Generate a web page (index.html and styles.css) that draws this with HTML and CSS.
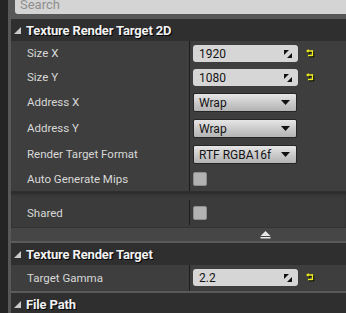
FILE: index.html
```html
<!DOCTYPE html>
<html>
<head>
<meta charset="utf-8">
<link rel="stylesheet" href="styles.css">
</head>
<body>
<div class="app">
  <div class="gutter"></div>
  <div class="strip"></div>
  <div class="panel">
    <div class="search-wrap"><div class="search"><span>Search</span></div></div>

    <div class="cat-header"><span class="tri"></span><span class="cat-title">Texture Render Target 2D</span></div>
    <div class="rows">
      <div class="row row-input">
        <div class="name">Size X</div>
        <div class="value">
          <div class="num"><span>1920</span><svg class="spin" width="8" height="8" viewBox="0 0 8 8"><polygon points="0,0 5,0 0,5" fill="#111"/><polygon points="8,3 8,8 3,8" fill="#111"/></svg></div>
          <svg class="reset" width="10" height="10" viewBox="0 0 10 10"><g transform="translate(1,1)" fill="#000" stroke="#000"><path d="M2 2H6.5V6.5H2" fill="none" stroke-width="1.4"/><polygon points="0,2 2.6,0 2.6,4" stroke="none"/></g><g fill="#f0f020" stroke="#f0f020"><path d="M2 2H6.5V6.5H2" fill="none" stroke-width="1.4"/><polygon points="0,2 2.6,0 2.6,4" stroke="none"/></g></svg>
        </div>
      </div>
      <div class="row row-input">
        <div class="name">Size Y</div>
        <div class="value">
          <div class="num"><span>1080</span><svg class="spin" width="8" height="8" viewBox="0 0 8 8"><polygon points="0,0 5,0 0,5" fill="#111"/><polygon points="8,3 8,8 3,8" fill="#111"/></svg></div>
          <svg class="reset" width="10" height="10" viewBox="0 0 10 10"><g transform="translate(1,1)" fill="#000" stroke="#000"><path d="M2 2H6.5V6.5H2" fill="none" stroke-width="1.4"/><polygon points="0,2 2.6,0 2.6,4" stroke="none"/></g><g fill="#f0f020" stroke="#f0f020"><path d="M2 2H6.5V6.5H2" fill="none" stroke-width="1.4"/><polygon points="0,2 2.6,0 2.6,4" stroke="none"/></g></svg>
        </div>
      </div>
      <div class="row row-combo">
        <div class="name">Address X</div>
        <div class="value"><div class="combo"><span>Wrap</span><span class="caret"></span></div></div>
      </div>
      <div class="row row-combo">
        <div class="name">Address Y</div>
        <div class="value"><div class="combo"><span>Wrap</span><span class="caret"></span></div></div>
      </div>
      <div class="row row-combo">
        <div class="name">Render Target Format</div>
        <div class="value"><div class="combo"><span>RTF RGBA16f</span><span class="caret"></span></div></div>
      </div>
      <div class="row row-check">
        <div class="name">Auto Generate Mips</div>
        <div class="value"><div class="check"></div></div>
      </div>
    </div>

    <div class="advanced">
      <div class="row row-shared">
        <div class="name">Shared</div>
        <div class="value"><div class="check"></div></div>
      </div>
      <div class="adv-bar">
        <svg width="11" height="8" viewBox="0 0 11 8"><polygon points="5.5,0 10.5,5 0.5,5" fill="#e6e6e6"/><rect x="0.5" y="6" width="10" height="1.5" fill="#e6e6e6"/></svg>
      </div>
    </div>

    <div class="sep"></div>
    <div class="cat-header"><span class="tri"></span><span class="cat-title">Texture Render Target</span></div>
    <div class="row row-gamma">
      <div class="name">Target Gamma</div>
      <div class="value">
        <div class="num"><span>2.2</span><svg class="spin" width="8" height="8" viewBox="0 0 8 8"><polygon points="0,0 5,0 0,5" fill="#111"/><polygon points="8,3 8,8 3,8" fill="#111"/></svg></div>
        <svg class="reset" width="10" height="10" viewBox="0 0 10 10"><g transform="translate(1,1)" fill="#000" stroke="#000"><path d="M2 2H6.5V6.5H2" fill="none" stroke-width="1.4"/><polygon points="0,2 2.6,0 2.6,4" stroke="none"/></g><g fill="#f0f020" stroke="#f0f020"><path d="M2 2H6.5V6.5H2" fill="none" stroke-width="1.4"/><polygon points="0,2 2.6,0 2.6,4" stroke="none"/></g></svg>
      </div>
    </div>
    <div class="sep"></div>
    <div class="cat-header"><span class="tri"></span><span class="cat-title">File Path</span></div>
  </div>
</div>
</body>
</html>
```

FILE: styles.css
```css
* { box-sizing: border-box; }
html, body { margin: 0; padding: 0; }
body {
  width: 346px;
  height: 313px;
  overflow: hidden;
  background: #242424;
  font-family: Roboto, "Liberation Sans", sans-serif;
}
.app { display: flex; height: 313px; }
.gutter { width: 8px; background: #242424; flex: none; }
.strip { width: 3px; background: #585858; flex: none; }
.panel {
  flex: 1;
  background: #575757;
  display: flex;
  flex-direction: column;
  overflow: hidden;
}
.search-wrap { height: 14px; padding-left: 4px; margin-bottom: 5px; flex: none; }
.search {
  height: 14px;
  background: #d4d4d4;
  border-radius: 0 0 0 3px;
  overflow: hidden;
  padding-left: 5px;
}
.search span {
  display: block;
  font-size: 13px;
  line-height: 14px;
  margin-top: -2px;
  color: #8e8e8e;
}
.cat-header {
  height: 22px;
  flex: none;
  background: #2f2f2f;
  display: flex;
  align-items: center;
  padding-left: 3px;
}
.tri {
  width: 7px;
  height: 7px;
  background: #c9c9c9;
  clip-path: polygon(100% 0, 100% 100%, 0 100%);
  margin-right: 5px;
  margin-top: 1px;
}
.cat-title {
  color: #f2f2f2;
  font-weight: 700;
  font-size: 13px;
  letter-spacing: -0.15px;
  text-shadow: 1px 1px 0 #000;
}
.rows { background: #3e3e3e; flex: none; padding-bottom: 1px; box-shadow: inset 0 -1px 0 #2e2e2e; }
.row {
  display: grid;
  grid-template-columns: 179px 1fr;
  background: #3e3e3e;
  flex: none;
}
.name {
  border-right: 1px solid #1d1d1d;
  padding-left: 16px;
  color: #d8d8d8;
  font-size: 11.5px;
  display: flex;
  align-items: center;
}
.value {
  padding-left: 3px;
  display: flex;
  align-items: center;
}
.row-input .value { padding-top: 4px; padding-bottom: 3px; }
.row-combo .value { padding-top: 4px; padding-bottom: 3px; }
.row-check .value { padding-top: 5px; padding-bottom: 5px; }
.num {
  width: 105px;
  height: 17px;
  background: #d6d6d6;
  border-radius: 3px;
  display: flex;
  align-items: center;
  justify-content: space-between;
  padding: 0 6px 0 6px;
  font-size: 12px;
  color: #141414;
}
.spin { display: block; }
.reset { display: block; margin-left: 8px; margin-top: 1px; }
.combo {
  width: 104px;
  height: 19px;
  border: 1px solid #262626;
  border-radius: 2px;
  background: linear-gradient(#e6e6e6, #c6c6c6 60%, #b4b4b4);
  display: flex;
  align-items: center;
  justify-content: space-between;
  padding: 0 6px 0 5px;
  font-size: 12px;
  color: #141414;
}
.caret {
  width: 9px;
  height: 5px;
  background: #111;
  clip-path: polygon(0 0, 100% 0, 50% 100%);
}
.check {
  width: 14px;
  height: 14px;
  border-radius: 2px;
  background: #b2b2b2;
  border: 1px solid #8e8e8e;
}
.advanced {
  background: #3b3b3b;
  flex: none;
  padding-top: 6px;
  box-shadow: inset 0 3px 3px -1px #2a2a2a;
}
.row-shared { background: transparent; height: 29px; }
.row-shared .name { border-right: none; }
.row-shared .value { border-left: 1px solid #1d1d1d; margin: 2px 0; padding-left: 3px; margin-left: -1px; }
.adv-bar {
  height: 14px;
  background: #464646;
  border-top: 1px solid #333;
  display: flex;
  justify-content: center;
  align-items: center;
}
.adv-bar svg { margin-left: 173px; }
.sep { height: 2px; background: #5a5a5a; flex: none; }
.row-gamma { height: 26px; }
.row-gamma .value { padding-top: 4px; padding-bottom: 5px; }
```
